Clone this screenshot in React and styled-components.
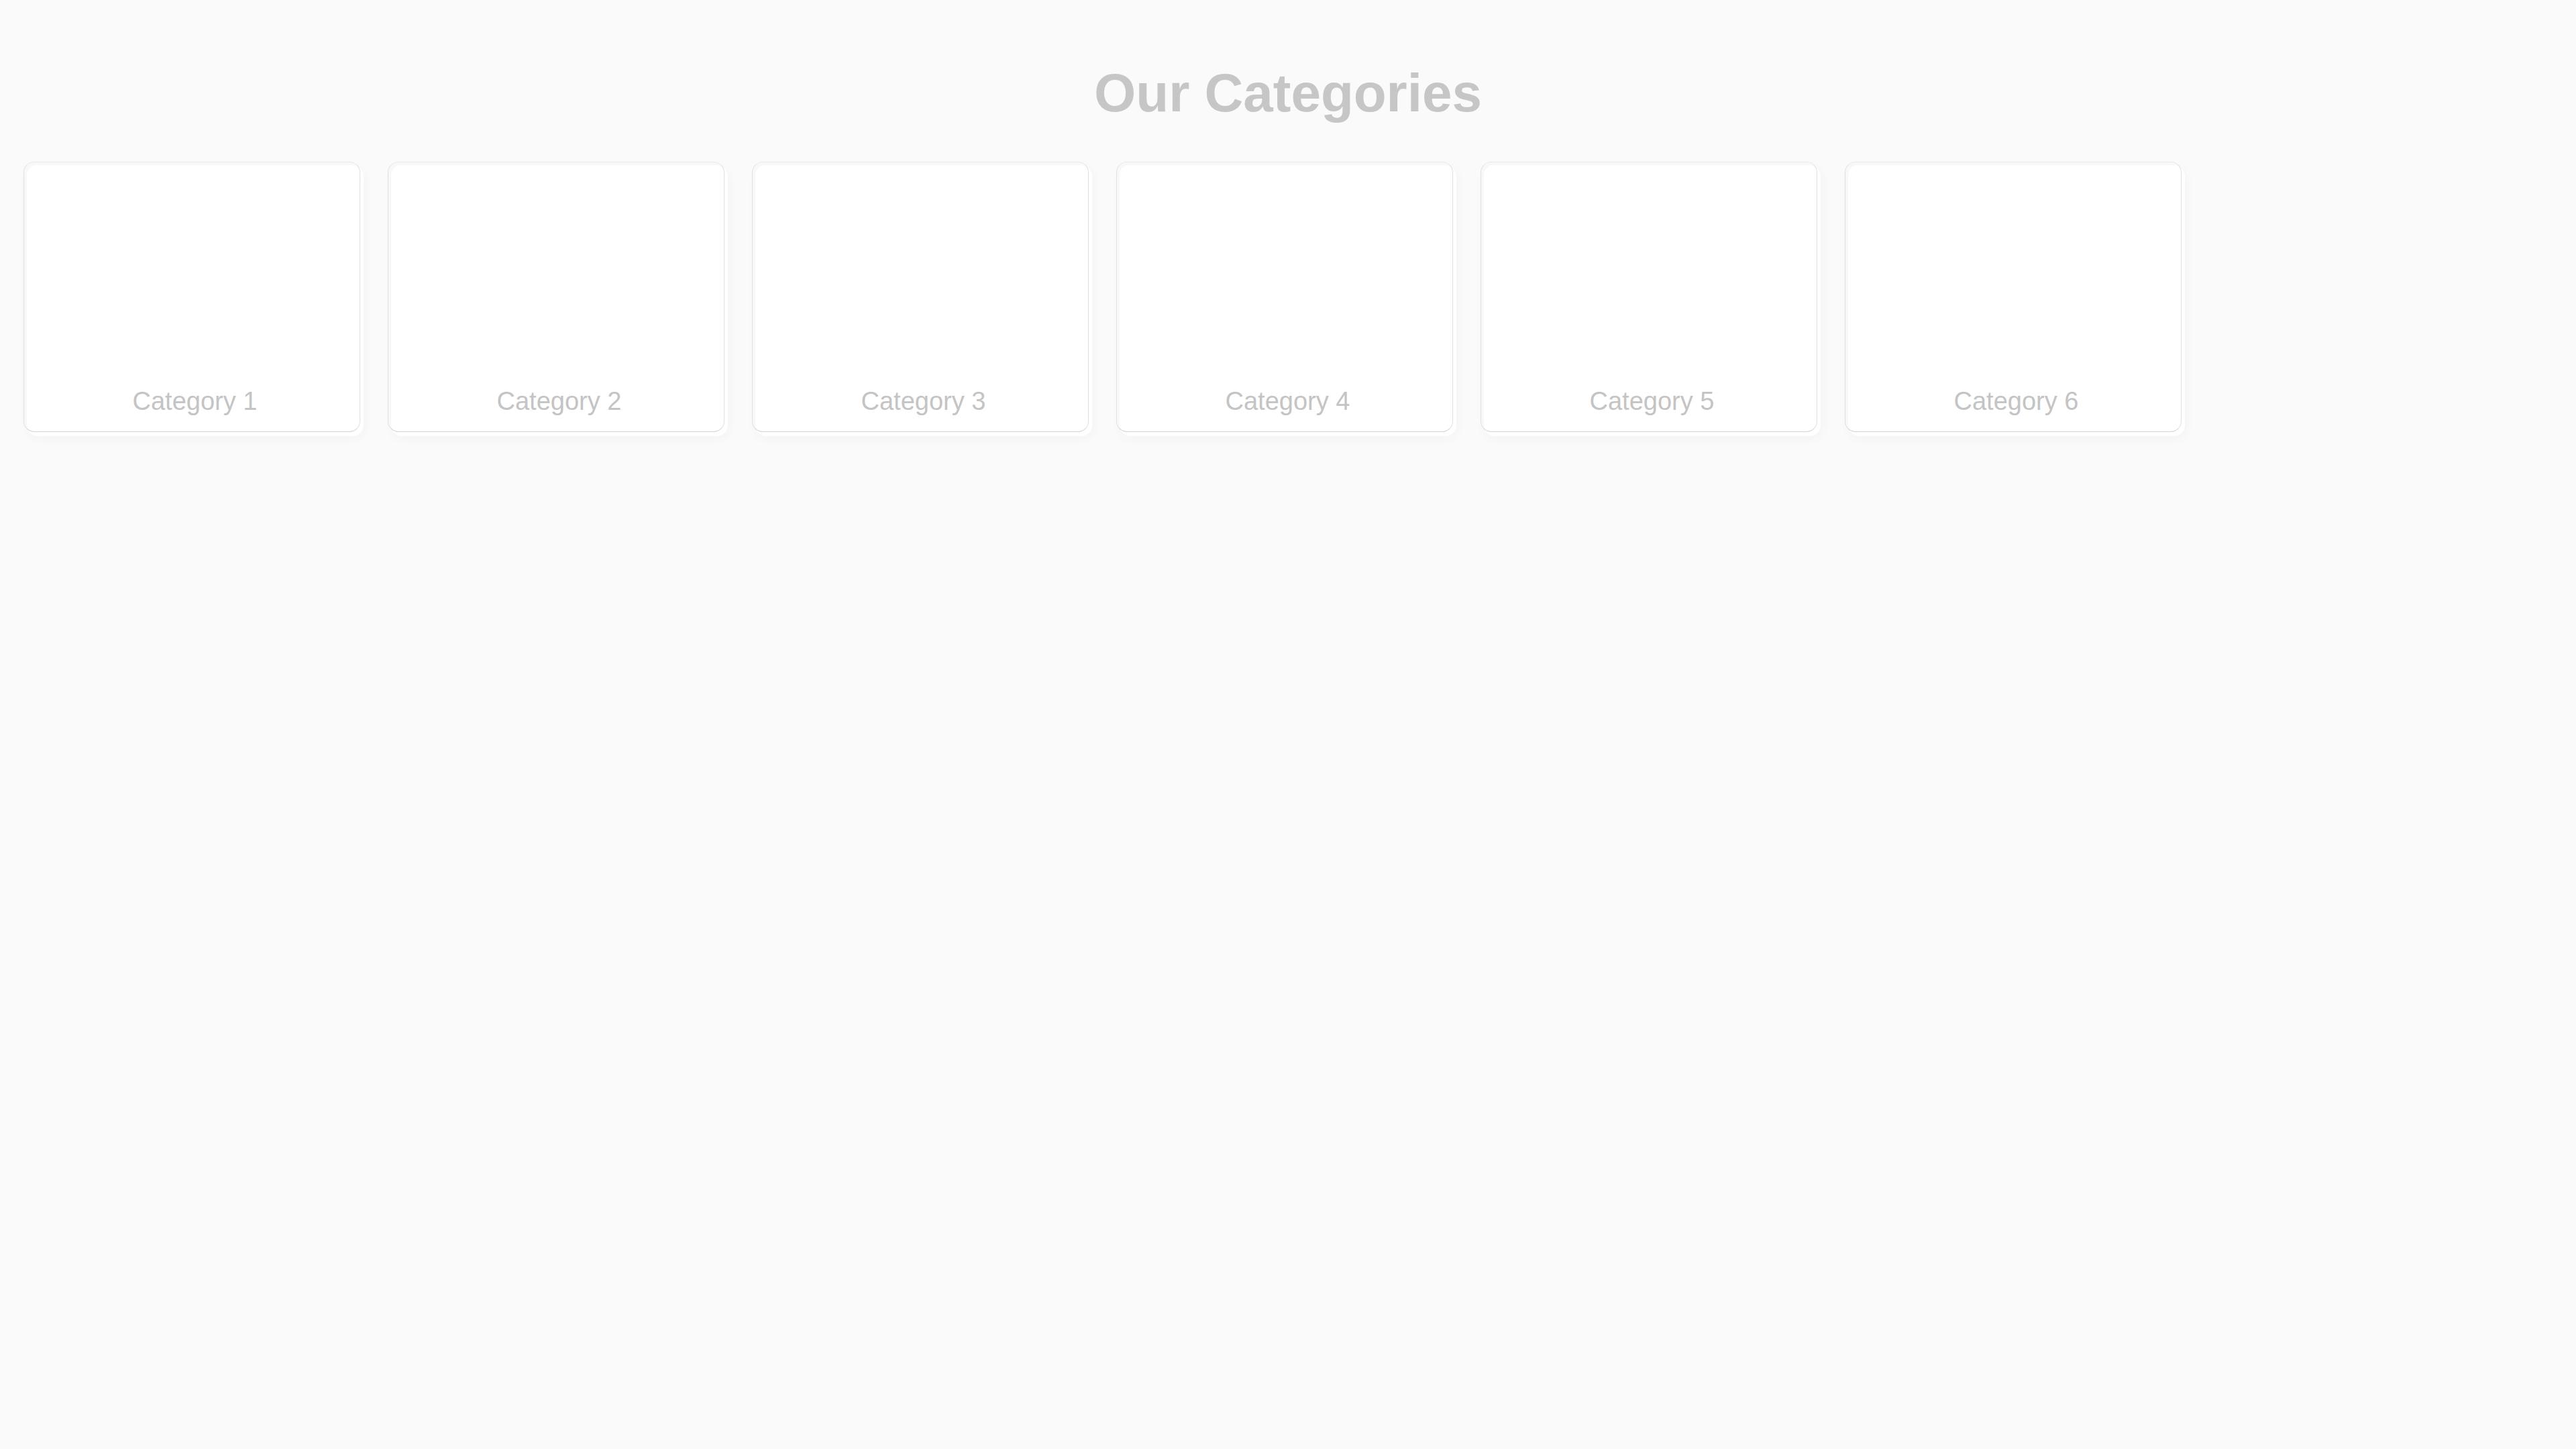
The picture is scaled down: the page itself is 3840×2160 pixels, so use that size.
import React from "react";
import styled, { createGlobalStyle } from "styled-components";

const Global = createGlobalStyle`
  html, body {
    margin: 0;
    padding: 0;
    background: #fafafa;
  }
  body {
    font-family: "Liberation Sans", Arial, sans-serif;
  }
  *, *::before, *::after {
    box-sizing: border-box;
  }
`;

const Page = styled.main`
  min-height: 100vh;
  background: #fafafa;
  padding: 0 35px;
`;

const Title = styled.h1`
  margin: 93px 0 56px;
  text-align: center;
  font-family: "Liberation Sans", Arial, sans-serif;
  font-weight: 700;
  font-size: 80px;
  line-height: 92px;
  color: #c6c6c6;
`;

const Grid = styled.div`
  display: flex;
  gap: 41px;
`;

const Card = styled.div`
  width: 502px;
  height: 403px;
  display: flex;
  flex-direction: column;
  justify-content: flex-end;
  align-items: center;
  padding: 0 0 23px 9px;
  background: #ffffff;
  border: 1px solid #e0e0e0;
  border-top-color: #e9e9e9;
  border-bottom-color: #d4d4d4;
  border-radius: 16px;
  box-shadow: inset 4px 4px 0 #f8f8f8, 5px 6px 0 #ffffff,
    6px 10px 18px rgba(0, 0, 0, 0.03);
`;

const Label = styled.span`
  font-family: "Liberation Sans", Arial, sans-serif;
  font-size: 38px;
  line-height: 44px;
  color: #c4c4c4;
`;

const categories = [1, 2, 3, 4, 5, 6].map((n) => `Category ${n}`);

export default function App() {
  return (
    <>
      <Global />
      <Page>
        <Title>Our Categories</Title>
        <Grid>
          {categories.map((c) => (
            <Card key={c}>
              <Label>{c}</Label>
            </Card>
          ))}
        </Grid>
      </Page>
    </>
  );
}
